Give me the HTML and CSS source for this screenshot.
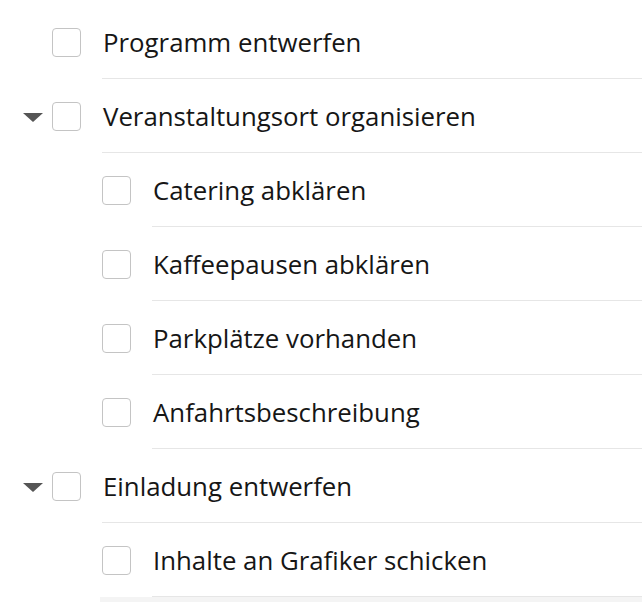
FILE: index.html
```html
<!DOCTYPE html>
<html lang="de">
<head>
<meta charset="utf-8">
<link rel="stylesheet" href="styles.css">
</head>
<body>
<ul class="tasks">
  <li class="row">
    <span class="toggle"></span>
    <span class="check"></span>
    <span class="label">Programm entwerfen</span>
  </li>
  <li class="row">
    <span class="toggle open"></span>
    <span class="check"></span>
    <span class="label">Veranstaltungsort organisieren</span>
  </li>
  <li class="row child">
    <span class="toggle"></span>
    <span class="check"></span>
    <span class="label">Catering abklären</span>
  </li>
  <li class="row child">
    <span class="toggle"></span>
    <span class="check"></span>
    <span class="label">Kaffeepausen abklären</span>
  </li>
  <li class="row child">
    <span class="toggle"></span>
    <span class="check"></span>
    <span class="label">Parkplätze vorhanden</span>
  </li>
  <li class="row child">
    <span class="toggle"></span>
    <span class="check"></span>
    <span class="label">Anfahrtsbeschreibung</span>
  </li>
  <li class="row">
    <span class="toggle open"></span>
    <span class="check"></span>
    <span class="label">Einladung entwerfen</span>
  </li>
  <li class="row child">
    <span class="toggle"></span>
    <span class="check"></span>
    <span class="label">Inhalte an Grafiker schicken</span>
  </li>
  <li class="row next"></li>
</ul>
</body>
</html>
```
FILE: styles.css
```css
html, body {
  margin: 0;
  padding: 0;
  background: #ffffff;
}

body {
  width: 642px;
  height: 602px;
  overflow: hidden;
  font-family: "Open Sans", "Noto Sans", sans-serif;
  color: #161616;
}

.tasks {
  list-style: none;
  margin: 0;
  padding: 5px 0 0 0;
}

.row {
  display: flex;
  align-items: center;
  height: 74px;
}

.row.child {
  padding-left: 50px;
}

.toggle {
  width: 52px;
  height: 74px;
  flex: none;
  display: flex;
  align-items: center;
  justify-content: flex-end;
  padding-right: 9px;
  box-sizing: border-box;
}

.toggle.open::before {
  content: "";
  display: block;
  width: 0;
  height: 0;
  border-left: 10px solid transparent;
  border-right: 10px solid transparent;
  border-top: 9px solid #555555;
  margin-top: 2px;
}

.check {
  flex: none;
  width: 29px;
  height: 29px;
  box-sizing: border-box;
  border: 1.5px solid #c4c4c4;
  border-radius: 4px;
  background: #ffffff;
  margin-right: 21px;
}

.label {
  flex: 1;
  align-self: stretch;
  display: flex;
  align-items: center;
  padding-left: 1px;
  border-bottom: 1px solid #e6e6e6;
  font-size: 25.8px;
  white-space: nowrap;
}

.row.next {
  height: 20px;
  margin-left: 100px;
  background: #f4f4f4;
}
```
